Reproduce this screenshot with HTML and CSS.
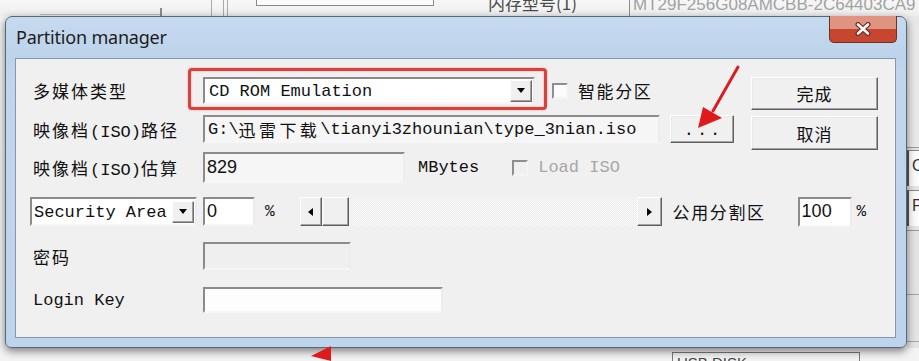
FILE: index.html
```html
<!DOCTYPE html>
<html lang="zh-CN">
<head>
<meta charset="utf-8">
<title>Partition manager</title>
<link rel="stylesheet" href="styles.css">
</head>
<body>
<div class="desk">
  <div class="bg">
    <div class="bg-top">
      <span class="sp" style="width:40px"></span>
      <span class="tline"></span>
      <span class="tv1"></span>
      <span class="sp" style="width:49px"></span>
      <span class="v"></span>
      <span class="sp" style="width:11px"></span>
      <span class="v"></span>
      <span class="sp" style="width:3px"></span>
      <span class="v"></span>
      <span class="sp" style="width:28px"></span>
      <span class="tbox"></span>
      <span class="sp" style="width:54px"></span>
      <span class="ttext">内存型号(1)</span>
      <span class="v dark"></span>
      <span class="ttext2">MT29F256G08AMCBB-2C64403CA9</span>
    </div>
    <div class="bg-mid">
      <div class="bg-main"></div>
      <div class="bg-side">
        <div class="sd1"></div>
        <div class="cbox">C</div>
        <div class="cbox p">P</div>
        <div class="sd2"></div>
        <div class="sd3"></div>
      </div>
    </div>
    <div class="bg-bottom">
      <div class="usb">USB DISK</div>
    </div>
  </div>

  <div class="window">
    <div class="titlebar">
      <span class="title">Partition manager</span>
      <div class="closebtn">
        <span class="closeglow"></span>
        <svg class="xicon" width="16" height="14" viewBox="0 0 16 14">
          <path d="M3 2.5 L13 11.5 M13 2.5 L3 11.5" stroke="#6a2a22" stroke-width="5" stroke-linecap="round" fill="none"/>
          <path d="M3 2.5 L13 11.5 M13 2.5 L3 11.5" stroke="#ffffff" stroke-width="2.6" stroke-linecap="round" fill="none"/>
        </svg>
      </div>
    </div>
    <div class="client">
      <div class="top">
        <div class="top-left">
          <div class="row r1">
            <span class="lbl"><span class="cj">多媒体类型</span></span>
            <div class="combo media"><span class="ctext">CD ROM Emulation</span><span class="dd"><i class="tri-down"></i></span></div>
            <span class="chk"></span>
            <span class="opt">智能分区</span>
          </div>
          <div class="row r2">
            <span class="lbl"><span class="cj">映像档</span>(ISO)<span class="cj">路径</span></span>
            <div class="field ro path">G:\<span class="cjf">迅雷下载</span>\tianyi3zhounian\type_3nian.iso</div>
            <div class="btn browse">...</div>
          </div>
        </div>
        <div class="btns">
          <div class="btn big">完成</div>
          <div class="btn big b2">取消</div>
        </div>
      </div>

      <div class="row r3">
        <span class="lbl"><span class="cj">映像档</span>(ISO)<span class="cj">估算</span></span>
        <div class="field ro size num">829</div>
        <span class="unit">MBytes</span>
        <span class="chk dis"></span>
        <span class="disabled">Load ISO</span>
      </div>

      <div class="row r4">
        <div class="combo area"><span class="ctext">Security Area</span><span class="dd"><i class="tri-down"></i></span></div>
        <div class="field pct num">0</div>
        <span class="pc">%</span>
        <div class="scroll">
          <span class="sbtn"><i class="tri-left"></i></span>
          <span class="thumb"></span>
          <span class="track"></span>
          <span class="sbtn r"><i class="tri-right"></i></span>
        </div>
        <span class="opt pub">公用分割区</span>
        <div class="field pct2 num">100</div>
        <span class="pc pc2">%</span>
      </div>

      <div class="row r5">
        <span class="lbl"><span class="cj">密码</span></span>
        <div class="field dis pwd"></div>
      </div>

      <div class="row r6">
        <span class="lbl">Login Key</span>
        <div class="field key"></div>
      </div>
    </div>
  </div>

  <div class="mark"></div>
  <svg class="arrows" width="919" height="361" viewBox="0 0 919 361">
    <line x1="738" y1="67" x2="713" y2="111" stroke="#d81f1f" stroke-width="3" stroke-linecap="round"/>
    <polygon points="698,128 703,107 722,118" fill="#e01a1a"/>
    <polygon points="311,356 331,346 331,361" fill="#e01a1a"/>
  </svg>
</div>
</body>
</html>
```

FILE: styles.css
```css
* { box-sizing: border-box; }
body { margin: 0; background: #f2f2f2; }

.desk {
  position: relative;
  width: 919px;
  height: 361px;
  overflow: hidden;
  background: #f3f3f3;
  font-family: "Liberation Mono", "Noto Sans CJK SC", monospace;
  color: #111;
}

/* ---------- background application ---------- */
.bg { display: flex; flex-direction: column; height: 361px; }
.bg-top { height: 16px; flex: none; display: flex; align-items: flex-start; background: linear-gradient(#f7f7f7, #eeeeee); overflow: hidden; }
.sp { flex: none; height: 1px; }
.tline { flex: none; width: 120px; height: 15px; border-bottom: 1px solid #b9b9b9; }
.tv1 { flex: none; width: 2px; height: 8px; margin-top: 8px; background: #8a8a8a; }
.v { flex: none; width: 1px; height: 16px; background: #a9a9a9; }
.v.dark { background: #8d8d8d; }
.tbox { flex: none; width: 178px; height: 6px; border: 1px solid #8a8a8a; border-top: 0; background: #fbfbfb; }
.ttext { flex: none; width: 141px; margin-top: -7px; font: 17px/20px "Noto Sans CJK SC", sans-serif; color: #4a4a4a; }
.ttext2 { flex: none; margin-left: 3px; margin-top: -5px; font: 17px/20px "Liberation Sans", sans-serif; color: #a2a2a2; white-space: nowrap; }

.bg-mid { flex: 1; display: flex; }
.bg-main { flex: 1; }
.bg-side { flex: none; width: 12px; display: flex; flex-direction: column; background: #e4e4e4; }
.sd1 { height: 132px; border-bottom: 1px solid #9a9a9a; margin-bottom: 2px; background: #e9e9e9; }
.cbox { height: 36px; border-left: 2px solid #555; border-top: 1px solid #8a8a8a; background: #fbfbfb; font: 16px/30px "Liberation Sans", sans-serif; padding-left: 3px; color: #333; margin-bottom: 4px; overflow: hidden; }
.sd2 { height: 64px; border-top: 1px solid #9a9a9a; }
.sd3 { height: 48px; border-top: 1px solid #a5a5a5; border-bottom: 1px solid #a5a5a5; }

.bg-bottom { height: 13px; flex: none; display: flex; }
.usb { margin: 4px 0 0 672px; width: 188px; height: 14px; border: 1px solid #7a7a7a; border-bottom: 0; font: 15px/20px "Liberation Sans", sans-serif; color: #444; padding-left: 4px; overflow: hidden; }

/* ---------- window ---------- */
.window {
  position: absolute;
  left: 5px;
  top: 16px;
  width: 902px;
  height: 332px;
  border: 1px solid #56687c;
  border-radius: 7px 7px 6px 6px;
  background: linear-gradient(180deg, #c6daef 0px, #bcd3eb 41px, #c1d6ed 60px, #bed4ec 100%);
  padding: 0 10px 9px 9px;
  display: flex;
  flex-direction: column;
  box-shadow: 0 3px 9px rgba(0, 0, 0, 0.5);
}
.titlebar { height: 41px; flex: none; display: flex; align-items: flex-start; }
.title { flex: none; margin: 10px 0 0 1px; font: 18px/20px "Noto Sans", sans-serif; color: #1d1d1d; letter-spacing: -0.2px; }

.closebtn {
  position: relative;
  z-index: 3;
  flex: none;
  display: flex;
  align-items: center;
  justify-content: center;
  margin: -1px -1px 0 auto;
  width: 68px;
  height: 27px;
  background: #c7462f;
  border: 1px solid #6b3126;
  border-top-width: 0;
  border-radius: 0 0 5px 5px;
  overflow: hidden;
}
.closeglow {
  position: absolute;
  left: 0;
  top: 0;
  width: 100%;
  height: 13px;
  background: #df9482;
}
.xicon { position: relative; display: block; flex: none; }

.client {
  flex: 1;
  border: 1px solid #8497ad;
  background: #f0f0f0;
  padding: 18px 0 0 17px;
}

.top { display: flex; align-items: flex-start; }
.top-left { display: flex; flex-direction: column; gap: 11px; width: 701px; }
.btns { margin-left: 17px; display: flex; flex-direction: column; gap: 6px; }

.row { display: flex; align-items: center; font-size: 17px; white-space: nowrap; }
.lbl { flex: none; width: 170px; font-size: 17px; }
.cj { letter-spacing: 2px; }
.cjf { letter-spacing: 3.4px; }

/* sunken field */
.field {
  flex: none;
  height: 28px;
  border: 2px solid;
  border-color: #8b8b8b #ececec #f6f6f6 #8b8b8b;
  background: #ffffff;
  padding-left: 2px;
  display: flex;
  align-items: center;
  overflow: hidden;
  font-size: 17px;
}
.field.ro { background: #f6f6f6; }
.field.dis { background: #efefef; }
.num { font-family: "Liberation Sans", sans-serif; font-size: 18px; padding-left: 2px; }

.combo {
  flex: none;
  display: flex;
  align-items: center;
  border: 2px solid;
  border-color: #8b8b8b #ececec #f6f6f6 #8b8b8b;
  background: #fff;
}
.ctext { flex: 1; padding-left: 2px; padding-top: 2px; overflow: hidden; }
.dd {
  flex: none;
  width: 22px;
  height: 22px;
  margin-right: 1px;
  background: #f0f0f0;
  border: 1px solid;
  border-color: #ffffff #6d6d6d #6d6d6d #ffffff;
  box-shadow: inset -1px -1px 0 #a0a0a0;
  display: flex;
  align-items: center;
  justify-content: center;
}
.tri-down { display: block; width: 0; height: 0; border-left: 4px solid transparent; border-right: 4px solid transparent; border-top: 5px solid #000; }
.tri-left { display: block; width: 0; height: 0; border-top: 4px solid transparent; border-bottom: 4px solid transparent; border-right: 5px solid #000; }
.tri-right { display: block; width: 0; height: 0; border-top: 4px solid transparent; border-bottom: 4px solid transparent; border-left: 5px solid #000; }

.chk {
  flex: none;
  width: 16px;
  height: 16px;
  border: 2px solid;
  border-color: #8e8e8e #f4f4f4 #f4f4f4 #8e8e8e;
  background: #fbfbfb;
}
.chk.dis { background: #f0f0f0; }

.opt { font-family: "Noto Sans CJK SC", sans-serif; font-size: 17px; letter-spacing: 1.6px; }

.btn {
  flex: none;
  display: flex;
  align-items: center;
  justify-content: center;
  background: #f0f0f0;
  border: 1px solid;
  border-color: #ffffff #5f5f5f #5f5f5f #ffffff;
  box-shadow: inset -1px -1px 0 #a3a3a3, inset 1px 1px 0 #e8e8e8;
  color: #111;
}
.big { width: 127px; height: 33px; font-family: "Noto Sans CJK SC", sans-serif; font-size: 17px; letter-spacing: 1px; }
.b2 { height: 34px; }
.browse { width: 64px; height: 28px; margin-left: 10px; letter-spacing: 3px; padding-top: 2px; padding-left: 3px; }

/* sizes */
.r1 { height: 27px; }
.media { width: 332px; height: 27px; padding-left: 2px; }
.r1 .chk { margin-left: 17px; }
.r1 .opt { margin-left: 10px; }
.path { width: 457px; height: 28px; padding-left: 3px; }

.r3 { margin-top: 2px; height: 31px; }
.size { width: 202px; height: 31px; }
.unit { margin-left: 13px; }
.r3 .chk { margin-left: 33px; }
.disabled { margin-left: 10px; color: #a7a7a7; }

.r4 { margin-top: 14px; height: 29px; }
.area { width: 167px; height: 29px; margin-left: -3px; margin-right: 6px; }
.pct { width: 52px; height: 29px; }
.pc { margin-left: 10px; font-size: 16px; }
.scroll { flex: none; margin-left: 25px; width: 362px; height: 29px; display: flex; }
.sbtn {
  flex: none;
  width: 22px;
  height: 29px;
  background: #f0f0f0;
  border: 1px solid;
  border-color: #ffffff #5f5f5f #5f5f5f #ffffff;
  box-shadow: inset -1px -1px 0 #a3a3a3;
  display: flex;
  align-items: center;
  justify-content: center;
}
.sbtn.r { width: 25px; }
.thumb {
  flex: none;
  width: 27px;
  height: 29px;
  background: #f0f0f0;
  border: 1px solid;
  border-color: #ffffff #5f5f5f #5f5f5f #ffffff;
  box-shadow: inset -1px -1px 0 #a3a3a3;
}
.track {
  flex: 1;
  background-color: #f6f6f6;
  background-image: repeating-conic-gradient(#ebebeb 0 25%, #fafafa 0 50%);
  background-size: 2px 2px;
}
.pub { margin-left: 11px; width: 125px; }
.pct2 { width: 54px; height: 30px; }
.pc2 { margin-left: 5px; }

.r5 { margin-top: 16px; height: 28px; }
.pwd { width: 148px; height: 28px; }
.r6 { margin-top: 17px; height: 26px; }
.key { width: 240px; height: 26px; background: #fdfdfd; }

/* ---------- annotations ---------- */
.mark {
  position: absolute;
  left: 188px;
  top: 68px;
  width: 359px;
  height: 42px;
  border: 3px solid #d6423e;
  border-radius: 4px;
  box-shadow: 0 0 2px rgba(214, 66, 62, 0.55), inset 0 0 2px rgba(214, 66, 62, 0.55);
}
.arrows { position: absolute; left: 0; top: 0; pointer-events: none; }
```
